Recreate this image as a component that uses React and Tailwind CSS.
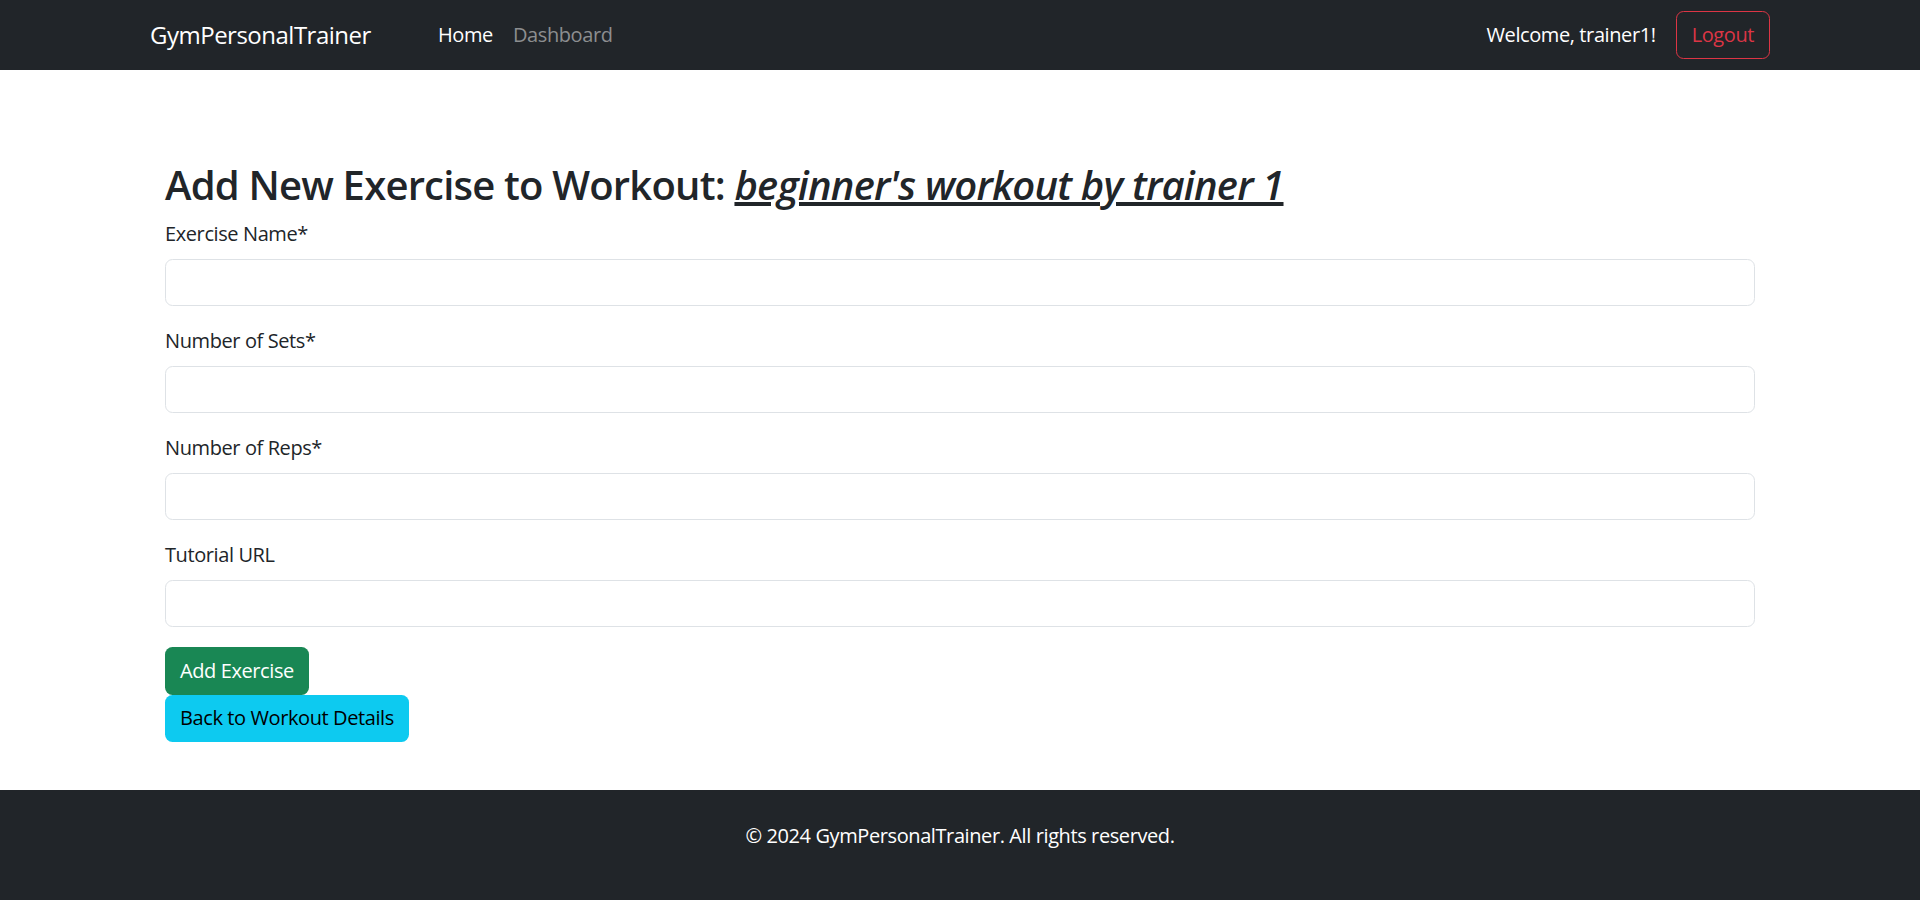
import React from "react"

const fields = [
  { id: "name", label: "Exercise Name*" },
  { id: "sets", label: "Number of Sets*" },
  { id: "reps", label: "Number of Reps*" },
  { id: "url", label: "Tutorial URL" },
]

export default function App() {
  return (
    <div
      className="min-h-screen flex flex-col bg-white text-[#212529] tracking-[-0.4px]"
      style={{ fontFamily: '"Open Sans", "Noto Sans", sans-serif' }}
    >
      <nav className="bg-[#212529] h-[70px] flex items-center">
        <div className="w-full px-[150px] flex items-center">
          <a href="#" className="w-[278px] text-[24px] tracking-[-0.5px] text-white leading-none">
            GymPersonalTrainer
          </a>
          <ul className="flex items-center text-[20px]">
            <li>
              <a href="#" className="px-[10px] text-white">Home</a>
            </li>
            <li>
              <a href="#" className="px-[10px] text-[#8c8e90]">Dashboard</a>
            </li>
          </ul>
          <div className="ml-auto flex items-center gap-[20px]">
            <span className="text-white text-[20px]">Welcome, trainer1!</span>
            <button className="h-[48px] px-[15px] border border-[#dc3545] text-[#dc3545] rounded-[7.5px] text-[20px]">
              Logout
            </button>
          </div>
        </div>
      </nav>

      <main className="px-[165px] pt-[91px] pb-[48px]">
        <h2 className="text-[40px] font-semibold leading-[48px] tracking-[-0.8px] mb-[10px]">
          Add New Exercise to Workout:{" "}
          <em>
            <u>beginner's workout by trainer 1</u>
          </em>
        </h2>
        <form>
          {fields.map((f) => (
            <div key={f.id} className="mb-[20px]">
              <label htmlFor={f.id} className="block text-[20px] leading-[30px] mb-[10px]">
                {f.label}
              </label>
              <input
                id={f.id}
                type="text"
                className="block w-full h-[47px] border border-[#dee2e6] rounded-[7.5px] px-[15px] text-[20px] outline-none"
              />
            </div>
          ))}
          <button
            type="button"
            className="block h-[47.5px] px-[15px] bg-[#198754] text-white text-[20px] rounded-[7.5px]"
          >
            Add Exercise
          </button>
          <button
            type="button"
            className="block h-[47.5px] px-[15px] bg-[#0dcaf0] text-black text-[20px] rounded-[7.5px]"
          >
            Back to Workout Details
          </button>
        </form>
      </main>

      <footer className="flex-1 bg-[#212529] text-white text-center pt-[31px] pb-[30px]">
        <p className="text-[20px] leading-[30px]">© 2024 GymPersonalTrainer. All rights reserved.</p>
      </footer>
    </div>
  )
}
